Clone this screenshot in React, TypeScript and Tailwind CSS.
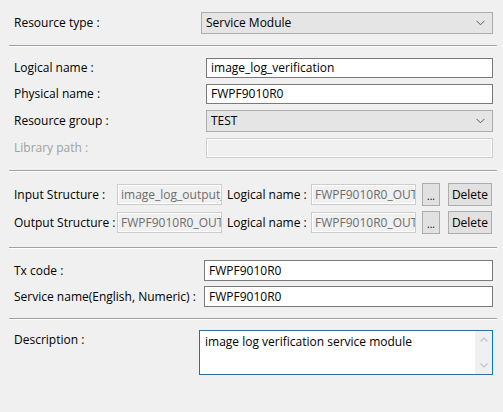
import React from "react";

const font = { fontFamily: '"Open Sans", "Noto Sans", sans-serif' };

function Chevron() {
  return (
    <svg width="9" height="6" viewBox="0 0 9 6" className="shrink-0">
      <path d="M0.5 0.8 L4.5 4.8 L8.5 0.8" fill="none" stroke="#5a5a5a" strokeWidth="1" />
    </svg>
  );
}

function Select({ value }: { value: string }) {
  return (
    <div className="flex h-[22px] flex-1 items-center justify-between border border-[#adadad] bg-[#e5e5e5] pl-[4px] pr-[7px] text-black">
      <span>{value}</span>
      <Chevron />
    </div>
  );
}

function TextBox({ value, h = "h-[20px]" }: { value: string; h?: string }) {
  return (
    <div className={`flex ${h} flex-1 items-center border border-[#7a7a7a] bg-white pl-[4px] text-black`}>
      {value}
    </div>
  );
}

function Separator({ mt }: { mt: string }) {
  return <div className={`${mt} ml-[9px] h-[2px] w-[488px] border-t border-b border-t-[#a0a0a0] border-b-white`} />;
}

function Row({ label, labelW, children, mt, dim }: { label: string; labelW: string; children: React.ReactNode; mt: string; dim?: boolean }) {
  return (
    <div className={`${mt} flex items-center pl-[14px] pr-[10px]`}>
      <div className={`${labelW} shrink-0 ${dim ? "text-[#a0a0a0]" : "text-black"}`}>{label}</div>
      {children}
    </div>
  );
}

function StructBox({ value }: { value: string }) {
  return (
    <div className="flex h-[21px] w-[105px] shrink-0 items-center overflow-hidden whitespace-nowrap border border-[#cccccc] bg-[#f0f0f0] pl-[3px] text-[#6d6d6d] shadow-[inset_0_0_0_1px_#ffffff]">
      {value}
    </div>
  );
}

function Btn({ children, w }: { children: React.ReactNode; w: string }) {
  return (
    <div className={`flex h-[23px] ${w} shrink-0 items-center justify-center border border-[#adadad] bg-[#e1e1e1] text-black`}>
      {children}
    </div>
  );
}

function StructRow({ label, value, logical, mt }: { label: string; value: string; logical: string; mt: string }) {
  return (
    <div className={`${mt} flex h-[23px] items-center pl-[14px]`}>
      <div className="w-[103px] shrink-0 whitespace-nowrap text-black">{label}</div>
      <StructBox value={value} />
      <div className="ml-[5px] w-[84px] shrink-0 whitespace-nowrap text-black">Logical name :</div>
      <StructBox value={logical} />
      <div className="ml-[6px]">
        <Btn w="w-[18px]">
          <span className="mt-[2px] text-[10px]">...</span>
        </Btn>
      </div>
      <div className="ml-[8px]">
        <Btn w="w-[44px]">Delete</Btn>
      </div>
    </div>
  );
}

export default function App() {
  return (
    <div style={font} className="h-[412px] w-[503px] overflow-hidden bg-[#f0f0f0] pt-[12px] text-[12px] leading-none">
      <Row label="Resource type :" labelW="w-[187px]" mt="mt-0">
        <Select value="Service Module" />
      </Row>

      <Separator mt="mt-[11px]" />

      <Row label="Logical name :" labelW="w-[192px]" mt="mt-[11px]">
        <TextBox value="image_log_verification" />
      </Row>
      <Row label="Physical name :" labelW="w-[192px]" mt="mt-[6px]">
        <TextBox value="FWPF9010R0" />
      </Row>
      <Row label="Resource group :" labelW="w-[192px]" mt="mt-[6px]">
        <Select value="TEST" />
      </Row>
      <Row label="Library path :" labelW="w-[192px]" mt="mt-[6px]" dim>
        <div className="h-[20px] flex-1 border border-[#cccccc] bg-[#f0f0f0] shadow-[inset_0_0_0_1px_#ffffff]" />
      </Row>

      <Separator mt="mt-[12px]" />

      <StructRow mt="mt-[11px]" label="Input Structure :" value="image_log_output_struct" logical="FWPF9010R0_OUTPUT" />
      <StructRow mt="mt-[5px]" label="Output Structure :" value="FWPF9010R0_OUTPUT" logical="FWPF9010R0_OUTPUT" />

      <Separator mt="mt-[13px]" />

      <Row label="Tx code :" labelW="w-[190px]" mt="mt-[11px]">
        <TextBox value="FWPF9010R0" h="h-[21px]" />
      </Row>
      <Row label="Service name(English, Numeric) :" labelW="w-[190px]" mt="mt-[5px]">
        <TextBox value="FWPF9010R0" h="h-[21px]" />
      </Row>

      <Separator mt="mt-[11px]" />

      <div className="mt-[10px] flex items-start pl-[14px] pr-[10px]">
        <div className="w-[185px] shrink-0 pt-[4px] text-black">Description :</div>
        <div className="flex h-[45px] flex-1 border border-[#0078d7] bg-white">
          <div className="flex-1 pl-[5px] pt-[5px] text-black">image log verification service module</div>
          <div className="flex w-[17px] flex-col items-center justify-between bg-[#f0f0f0] py-[6px]">
            <svg width="8" height="5" viewBox="0 0 8 5">
              <path d="M0.5 4.5 L4 1 L7.5 4.5" fill="none" stroke="#c2c2c2" strokeWidth="1.2" />
            </svg>
            <svg width="8" height="5" viewBox="0 0 8 5">
              <path d="M0.5 0.5 L4 4 L7.5 0.5" fill="none" stroke="#c2c2c2" strokeWidth="1.2" />
            </svg>
          </div>
        </div>
      </div>
    </div>
  );
}
